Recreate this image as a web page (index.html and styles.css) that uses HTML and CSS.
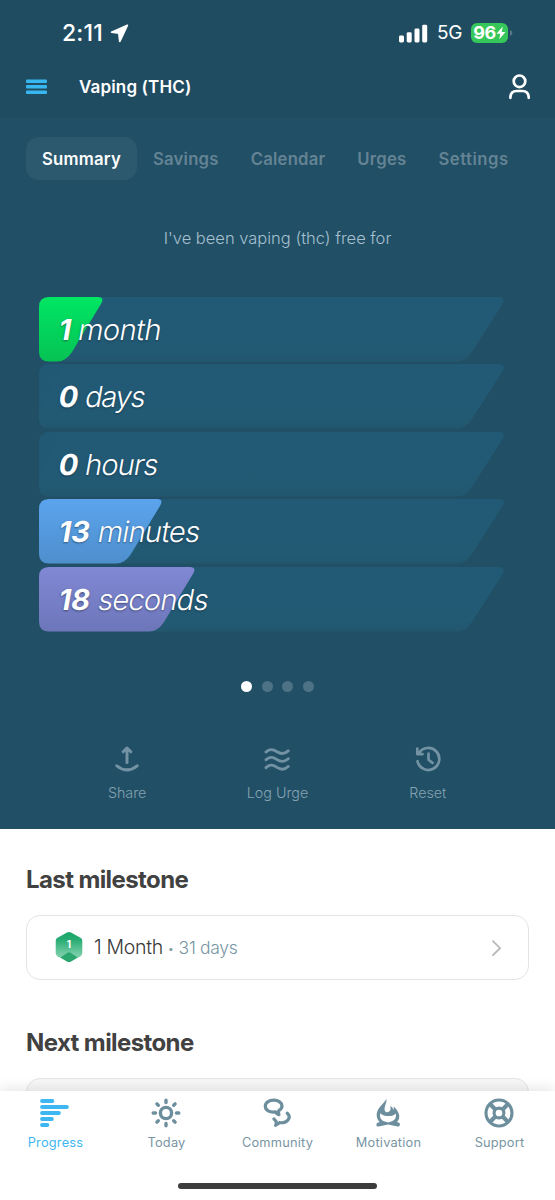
FILE: index.html
```html
<!DOCTYPE html>
<html lang="en">
<head>
<meta charset="utf-8">
<title>Vaping (THC)</title>
<link rel="stylesheet" href="styles.css">
</head>
<body>
<main class="screen">
  <section class="hero">
    <header class="topbar">
      <div class="status">
        <div class="clock"><span class="time">2:11</span>
          <svg width="19" height="19" viewBox="0 0 19 19"><path d="M17.3 1.3 1.6 8.2 8.8 9.2 9.8 17.3Z" fill="#fff" stroke="#fff" stroke-width="1.8" stroke-linejoin="round"/></svg>
        </div>
        <div class="indicators">
          <svg width="30" height="19" viewBox="0 0 30 19" fill="#fff"><rect x="1" y="11.5" width="5" height="7" rx="1.4"/><rect x="8.7" y="8.2" width="5" height="10.3" rx="1.4"/><rect x="16.5" y="4.5" width="5" height="14" rx="1.4"/><rect x="24.2" y=".7" width="5" height="17.8" rx="1.4"/></svg>
          <span class="network">5G</span>
          <span class="battery"><span class="charge">96</span><svg width="10" height="14" viewBox="0 0 10 14"><path d="M6.8.6.5 7.8h3.8L3.2 13.2 9.5 6H5.7Z" fill="#fff"/></svg></span>
          <svg class="battery-cap" width="3" height="6" viewBox="0 0 3 6"><path d="M0 0Q2.4 1 2.4 3T0 6Z" fill="#58768a"/></svg>
        </div>
      </div>
      <div class="titlebar">
        <svg width="22" height="16" viewBox="0 0 22 16" fill="#38b6ef"><rect x="0" y=".5" width="21" height="3.6" rx="1"/><rect x="0" y="6" width="21" height="3.6" rx="1"/><rect x="0" y="11.4" width="21" height="3.6" rx="1"/></svg>
        <h1 class="title">Vaping (THC)</h1>
        <svg class="profile" width="24" height="28" viewBox="0 0 24 28" fill="none" stroke="#fff" stroke-width="2.7" stroke-linecap="round"><circle cx="12.5" cy="8.3" r="5.8"/><path d="M3.4 24.8V24Q3.8 18 9.6 18H15.4Q21.2 18 21.7 24V24.8"/></svg>
      </div>
    </header>
    <nav class="tabs">
      <span class="tab tab-on">Summary</span><span class="tab">Savings</span><span class="tab">Calendar</span><span class="tab">Urges</span><span class="tab tab-wide">Settings</span>
    </nav>
    <p class="intro">I've been vaping (thc) free for</p>
    <svg class="defs" width="0" height="0">
      <defs>
        <linearGradient id="green" x2="0" y2="1"><stop stop-color="#00e663"/><stop offset="1" stop-color="#05c254"/></linearGradient>
        <linearGradient id="blue" x2="0" y2="1"><stop stop-color="#5ba4ed"/><stop offset="1" stop-color="#4e8fcd"/></linearGradient>
        <linearGradient id="violet" x2="0" y2="1"><stop stop-color="#8188d5"/><stop offset="1" stop-color="#6d76b9"/></linearGradient>
        <linearGradient id="empty" x2="0" y2="1"><stop stop-color="#225a76"/><stop offset=".8" stop-color="#225a74"/><stop offset="1" stop-color="#22576e"/></linearGradient>
        <path id="track" d="M10 0H459Q467.500 0 463.500 7L433 55Q427 64.500 418 64.500H10Q0 64.500 0 54.500V10Q0 0 10 0Z"/>
      </defs>
    </svg>
    <div class="bars">
      <div class="bar"><svg class="shape" width="466" height="65"><use href="#track" fill="url(#empty)"/><path d="M10 0H59Q65.500 0 62.500 6L33 55Q27 64.500 18 64.500H10Q0 64.500 0 54.500V10Q0 0 10 0Z" fill="url(#green)"/></svg><p class="label"><b>1</b><span>month</span></p></div>
      <div class="bar"><svg class="shape" width="466" height="65"><use href="#track" fill="url(#empty)"/><path d="M0 46V10Q0 0 10 0H25Z" fill="#205672" opacity=".25"/></svg><p class="label label-days"><b>0</b><span>days</span></p></div>
      <div class="bar"><svg class="shape" width="466" height="65"><use href="#track" fill="url(#empty)"/><path d="M0 46V10Q0 0 10 0H25Z" fill="#205672" opacity=".25"/></svg><p class="label label-hours"><b>0</b><span>hours</span></p></div>
      <div class="bar"><svg class="shape" width="466" height="65"><use href="#track" fill="url(#empty)"/><path d="M10 0H118Q124.500 0 121.500 6L92 55Q86 64.500 77 64.500H10Q0 64.500 0 54.500V10Q0 0 10 0Z" fill="url(#blue)"/></svg><p class="label label-long"><b>13</b><span>minutes</span></p></div>
      <div class="bar"><svg class="shape" width="466" height="65"><use href="#track" fill="url(#empty)"/><path d="M10 0H151Q157.500 0 154.500 6L125 55Q119 64.500 110 64.500H10Q0 64.500 0 54.500V10Q0 0 10 0Z" fill="url(#violet)"/></svg><p class="label label-long"><b>18</b><span>seconds</span></p></div>
    </div>
    <div class="dots"><i class="dot dot-on"></i><i class="dot"></i><i class="dot"></i><i class="dot"></i></div>
    <div class="actions">
      <div class="action"><svg width="28" height="28" viewBox="0 0 28 28" fill="none" stroke="#7393a4" stroke-width="3" stroke-linecap="round" stroke-linejoin="round"><path d="M14 17.500V4M10.200 6.800 14 3 17.800 6.800M3.800 20.800Q14 29 24.200 20.800"/></svg><span>Share</span></div>
      <div class="action"><svg width="28" height="28" viewBox="0 0 28 28" fill="none" stroke="#7393a4" stroke-width="2.900" stroke-linecap="round"><path d="M3 7C7 3 10.500 4.500 14 6.800S21 9.800 25.200 5.900M3 14.800C7 10.800 10.500 12.300 14 14.600S21 17.600 25.200 13.700M3 22.600C7 18.600 10.500 20.100 14 22.400S21 25.400 25.200 21.500"/></svg><span>Log Urge</span></div>
      <div class="action"><svg width="28" height="28" viewBox="0 0 28 28" fill="none" stroke="#7393a4" stroke-width="2.700" stroke-linecap="round" stroke-linejoin="round"><path d="M4.900 8.200A11 11 0 1 1 3.500 16.200M3.300 3.600V9.200H8.500M14.500 8.500V14.700L18.500 17.900"/></svg><span>Reset</span></div>
    </div>
  </section>
  <section class="milestones">
    <h2 class="heading">Last milestone</h2>
    <div class="card">
      <svg class="badge" width="28" height="32" viewBox="0 0 28 32"><defs><linearGradient id="hex" x2="0" y2="1"><stop stop-color="#18a467"/><stop offset=".25" stop-color="#24ab71"/><stop offset=".75" stop-color="#79cda8"/></linearGradient><clipPath id="hexclip"><path d="M12 1.500Q14 .4 16 1.500L25.500 6.800Q27.300 7.900 27.300 10V22Q27.300 24.100 25.500 25.200L16 30.500Q14 31.600 12 30.500L2.500 25.200Q.7 24.100.7 22V10Q.7 7.900 2.500 6.800Z"/></clipPath></defs><g clip-path="url(#hexclip)"><path fill="url(#hex)" d="M0 0h28v32H0z"/><path fill="#2aa66e" d="M5.500 26.500 12.500 21.800Q14 20.900 15.500 21.800L22.500 26.500 14 32Z"/></g><text class="badge-text" x="14" y="17">1</text></svg>
      <span class="card-title">1 Month</span><span class="sep">•</span><span class="card-sub">31 days</span>
      <svg class="chevron" width="12" height="18" viewBox="0 0 12 18" fill="none" stroke="#b9b9b9" stroke-width="1.900" stroke-linecap="round"><path d="M2 2.200 9 9.200 2 16.200"/></svg>
    </div>
    <h2 class="heading h-next">Next milestone</h2>
    <div class="card card-next"></div>
  </section>
  <footer class="tabbar">
    <div class="items">
      <div class="item item-on"><svg width="30" height="30" viewBox="0 0 30 30" stroke="#3db7f1" stroke-width="3.800" stroke-linecap="round"><path d="M2 3H12.400M2 9H26.900M2 15H18.900M2 21H11.900M2 27H7.400"/></svg><span>Progress</span></div>
      <div class="item"><svg width="30" height="30" viewBox="0 0 30 30" fill="none" stroke="#6d8e9c" stroke-width="3.400" stroke-linecap="round"><circle cx="15" cy="15" r="5.600"/><path d="M15 2.200V4.500M15 25.500V27.800M2.200 15H4.500M25.500 15H27.800M5.900 5.900 7.300 7.300M22.700 22.700 24.100 24.100M24.100 5.900 22.700 7.300M7.300 22.700 5.900 24.100"/></svg><span>Today</span></div>
      <div class="item"><svg width="30" height="30" viewBox="0 0 30 30" fill="none" stroke="#6d8e9c" stroke-width="3.200" stroke-linecap="round" stroke-linejoin="round"><path d="M16.400 16.600Q14.200 15.500 13.500 13.900C7.500 14.800 3.300 12 3.300 8.200C3.300 4.600 7 2.200 11.700 2.200S20 4.700 20 8.100Q20 10.800 16.600 12.800Q16.200 14.800 17 16.600Z"/><path d="M25.300 15.200C30 19.500 25 26 17.500 24.500Q16.200 26.500 13.600 27.300Q14.700 25.500 14 23.300L12 20.900"/></svg><span>Community</span></div>
      <div class="item"><svg width="30" height="30" viewBox="0 0 30 30" fill="#6d8e9c"><path d="M13.500.8C13.800 5.200 11.500 7.900 11.500 11.100Q11.500 14.200 14 14.200C17.200 14.200 18.600 11 16.900 8.300Q20.100 8.900 20.100 12Q21.100 11.300 20.700 8.500C24.900 12.500 29 18.700 24 24L26.100 24.800Q27.500 25.500 26.700 27.600Q26.300 28.900 24.600 28.500L15.200 26.500 5.600 28.500Q3.800 28.900 3.400 27.300Q3 25.400 4.600 24.800L6.700 24.100C2.600 19.700 2.800 14 6.700 9.200C9.300 5.900 11.700 4.100 13.500.8ZM7.300 15.200C6 20 9.200 23.100 12 23.600L15.200 24.400 18 23.600C21.400 22.700 24 19.100 22.700 15.400C20.500 17.600 17.900 18.300 14.500 17.900C10.400 18 9 16.500 7.300 15.200Z" fill-rule="evenodd"/></svg><span>Motivation</span></div>
      <div class="item"><svg width="30" height="30" viewBox="0 0 30 30" fill="none" stroke="#6d8e9c" stroke-width="3.100"><circle cx="15" cy="15" r="13"/><circle cx="15" cy="15" r="4.900"/><path stroke-width="4.200" d="M6.200 6.200 11.400 11.400M23.800 6.200 18.600 11.400M6.200 23.800 11.400 18.600M23.800 23.800 18.600 18.600"/></svg><span>Support</span></div>
    </div>
    <div class="home"></div>
  </footer>
</main>
</body>
</html>
```
FILE: styles.css
```css
* { box-sizing: border-box; }
body, h1, h2, p { margin: 0; }
body { font-family: Inter, "Liberation Sans", sans-serif; background: #fff; }
svg { display: block; flex: none; }
span { white-space: nowrap; }
.defs { position: absolute; }
.screen { width: 555px; height: 1200px; display: flex; flex-direction: column; overflow: hidden; }
.hero { height: 829px; flex: none; background: #214f65; }
.topbar { height: 118px; background: #204c61; padding-top: 21px; }
.status { height: 24px; padding: 0 42px 0 62px; display: flex; align-items: center; justify-content: space-between; color: #fff; }
.clock { display: flex; align-items: center; gap: 6px; }
.time { font-size: 23px; font-weight: 500; line-height: 26px; letter-spacing: .2px; width: 42px; }
.indicators { display: flex; align-items: center; }
.network { font-size: 19px; line-height: 26px; width: 25px; margin-left: 9px; margin-right: 9px; letter-spacing: -.4px; }
.battery { width: 37px; height: 20px; border-radius: 6px; background: #35c759; display: flex; align-items: center; justify-content: center; }
.charge { font-size: 18px; font-weight: 700; line-height: 20px; letter-spacing: -.4px; }
.battery-cap { margin-left: 2px; }
.titlebar { display: flex; align-items: center; height: 28px; margin-top: 28px; padding: 0 24px 0 26px; }
.title { font-size: 17px; font-weight: 600; color: #fff; margin-left: 31px; line-height: 28px; letter-spacing: .15px; }
.profile { margin-left: auto; }
.tabs { display: flex; padding: 19px 0 0 26px; }
.tab { height: 43px; padding: 0 16px; border-radius: 13px; line-height: 45px; font-size: 16.700px; font-weight: 600; color: #648394; letter-spacing: .22px; }
.tab-on { background: #2c596e; color: #fff; }
.tab-wide { letter-spacing: .5px; }
.intro { text-align: center; margin-top: 46px; height: 24px; line-height: 24px; font-size: 16.500px; font-weight: 300; color: #a6c0cf; }
.bars { margin: 47px 0 0 39px; display: grid; gap: 2.9px; }
.bar { display: grid; height: 64.5px; }
.shape, .label { grid-area: 1 / 1; }
.label { display: flex; gap: 7px; padding-left: 20px; color: #fff; font-size: 29px; line-height: 66px; font-weight: 300; text-shadow: 0 1px 2px #1238; letter-spacing: -.5px; transform: skewX(-10deg); }
.label b { font-weight: 700; letter-spacing: 0; }
.label-days { letter-spacing: -1.2px; }
.label-hours { letter-spacing: -.9px; }
.label-long { gap: 8px; letter-spacing: -.7px; }
.dots { display: flex; justify-content: center; gap: 9.7px; margin-top: 50px; }
.dot { width: 11px; height: 11px; border-radius: 50%; background: #4d7286; }
.dot-on { background: #fff; }
.actions { display: flex; padding: 0 52px; margin-top: 53px; }
.action { flex: 1; display: flex; flex-direction: column; align-items: center; font-size: 14.300px; line-height: 20px; font-weight: 300; color: #84a2b2; }
.action span { margin-top: 10px; }
.milestones { height: 262px; flex: none; overflow: hidden; padding: 36px 26px 0; background: #fff; }
.heading { font-size: 24px; line-height: 30px; font-weight: 700; color: #414141; letter-spacing: -.6px; }
.card { margin-top: 20px; height: 65px; border: 1.500px solid #e4e4e4; border-radius: 14px; display: flex; align-items: center; padding: 0 25px 0 28px; }
.badge { margin-top: -1px; }
.badge-text { font-size: 10px; font-weight: 700; fill: #fff; text-anchor: middle; }
.card-title { font-size: 19.500px; line-height: 24px; margin-top: -1px; font-weight: 300; color: #393939; margin-left: 11px; letter-spacing: -.3px; }
.sep { color: #829eaa; font-size: 10px; margin: 0 5px; }
.card-sub { font-size: 17.500px; font-weight: 300; color: #7895a3; letter-spacing: -.3px; }
.chevron { margin-left: auto; }
.h-next { margin-top: 48px; }
.card-next { background: #f7f7f7; }
.tabbar { position: relative; height: 109px; flex: none; background: #fff; box-shadow: 0 -2px 13px #0000001c; }
.items { display: flex; padding-top: 7px; }
.item { flex: 1; display: flex; flex-direction: column; align-items: center; color: #7895a3; font-size: 12.800px; line-height: 20px; letter-spacing: .2px; }
.item svg { margin-left: -1px; }
.item span { margin-top: 5px; }
.item-on { color: #3db7f1; }
.home { width: 199px; height: 6px; border-radius: 3px; background: #3c3c3c; margin: 30px auto 0; }
```
